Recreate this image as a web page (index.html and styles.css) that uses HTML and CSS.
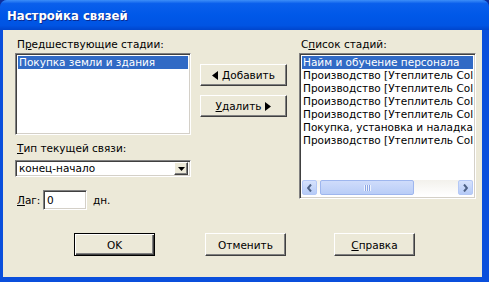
FILE: index.html
```html
<!DOCTYPE html>
<html lang="ru">
<head>
    <meta charset="UTF-8">
    <title>Настройка связей</title>
    <link rel="stylesheet" href="styles.css">
</head>
<body>
    <div class="window">
        <div class="titlebar">
            <span class="title">Настройка связей</span>
        </div>
        <div class="client">
            <div class="columns">
                <!-- left: previous stages, link type, lag -->
                <div class="col-left">
                    <div class="label">П<u>р</u>едшествующие стадии:</div>
                    <div class="listbox listbox-prev">
                        <div class="item selected">Покупка земли и здания</div>
                    </div>
                    <div class="label label-type"><u>Т</u>ип текущей связи:</div>
                    <div class="combo">
                        <span class="combo-value">конец-начало</span>
                        <span class="combo-btn">
                            <svg width="7" height="4" viewBox="0 0 7 4"><path d="M0 0h7L3.5 4z" fill="#000"/></svg>
                        </span>
                    </div>
                    <div class="lag-row">
                        <span class="lag-label"><u>Л</u>аг:</span>
                        <span class="edit">0</span>
                        <span class="lag-unit">дн.</span>
                    </div>
                </div>

                <!-- middle: add / remove -->
                <div class="col-mid">
                    <div class="btn btn-move">
                        <svg width="6" height="9" viewBox="0 0 6 9"><path d="M6 0v9L0 4.5z" fill="#000"/></svg>
                        <span><u>Д</u>обавить</span>
                    </div>
                    <div class="btn btn-move">
                        <span><u>У</u>далить</span>
                        <svg width="6" height="9" viewBox="0 0 6 9"><path d="M0 0v9l6-4.5z" fill="#000"/></svg>
                    </div>
                </div>

                <!-- right: all stages -->
                <div class="col-right">
                    <div class="label">С<u>п</u>исок стадий:</div>
                    <div class="listbox listbox-all">
                        <div class="items">
                            <div class="item selected">Найм и обучение персонала</div>
                            <div class="item">Производство [Утеплитель Col</div>
                            <div class="item">Производство [Утеплитель Col</div>
                            <div class="item">Производство [Утеплитель Col</div>
                            <div class="item">Производство [Утеплитель Col</div>
                            <div class="item">Покупка, установка и наладка</div>
                            <div class="item">Производство [Утеплитель Col</div>
                        </div>
                        <div class="hscroll">
                            <span class="sb-btn">
                                <svg width="5" height="8" viewBox="0 0 5 8"><path d="M4 0.5L1 4l3 3.5" fill="none" stroke="#4d6185" stroke-width="2"/></svg>
                            </span>
                            <div class="sb-track">
                                <div class="sb-thumb"><span class="grip"></span></div>
                            </div>
                            <span class="sb-btn">
                                <svg width="5" height="8" viewBox="0 0 5 8"><path d="M1 0.5L4 4 1 7.5" fill="none" stroke="#4d6185" stroke-width="2"/></svg>
                            </span>
                        </div>
                    </div>
                </div>
            </div>

            <div class="dialog-buttons">
                <div class="btn btn-default">OK</div>
                <div class="btn btn-cancel">Отменить</div>
                <div class="btn btn-help"><span><u>С</u>правка</span></div>
            </div>
        </div>
    </div>
</body>
</html>
```

FILE: styles.css
```css
body {
    margin: 0;
    background-color: #0d2f9c; /* behind the rounded corners */
    font-family: "DejaVu Sans", sans-serif;
    font-size: 10.5px;
    color: #000;
}
u {
    text-decoration: underline;
    text-underline-offset: 1px;
}
/* Window frame */
.window {
    width: 489px;
    height: 282px;
    display: flex;
    flex-direction: column;
    background-color: #0a4fdc;
    border-radius: 7px 7px 0 0;
    overflow: hidden;
}
.titlebar {
    height: 30px;
    flex-shrink: 0;
    display: flex;
    align-items: center;
    padding-left: 7px;
    background: linear-gradient(to bottom, #3d8ef8 0%, #0a5fec 12%, #0058e8 50%, #0054e3 85%, #0045cc 100%);
}
.title {
    color: white;
    font-family: "DejaVu Sans Condensed", "DejaVu Sans", sans-serif;
    font-weight: bold;
    font-size: 13px;
    padding-top: 1px;
    text-shadow: 1px 1px #0b2a8f;
}
.client {
    flex: 1;
    margin: 0 7px 5px 3px;
    padding: 8px 0 0 12px;
    background-color: #ece9d8;
}
/* Three columns */
.columns {
    display: flex;
    align-items: flex-start;
}
.col-left {
    width: 176px;
    display: flex;
    flex-direction: column;
}
.col-mid {
    width: 87px;
    margin-left: 9px;
    padding-top: 26px;
    display: flex;
    flex-direction: column;
    gap: 9px;
}
.col-right {
    width: 177px;
    margin-left: 12px;
}
.label {
    line-height: 13px;
    padding-left: 2px;
    margin-bottom: 2px;
    white-space: nowrap;
}
.label-type {
    margin-top: 7px;
    margin-bottom: 5px;
}
/* Sunken boxes */
.listbox, .combo, .edit {
    box-sizing: border-box;
    background-color: white;
    border: 1px solid;
    border-color: #808080 #ffffff #ffffff #808080;
    box-shadow: inset 1px 1px #404040, inset -1px -1px #d4d0c8;
}
.listbox {
    padding: 2px;
    overflow: hidden;
}
.listbox-prev {
    height: 82px;
}
.listbox-all {
    height: 146px;
    display: flex;
    flex-direction: column;
}
.items {
    flex: 1;
}
.item {
    height: 13px;
    line-height: 13px;
    padding-left: 1px;
    white-space: nowrap;
    overflow: hidden;
}
.item.selected {
    background-color: #316ac5;
    color: white;
}
/* Horizontal scrollbar, Luna style */
.hscroll {
    height: 15px;
    margin-bottom: 1px;
    display: flex;
    gap: 2px;
    background: linear-gradient(to bottom, #f3f1ec, #fefefe);
}
.sb-btn {
    width: 15px;
    box-sizing: border-box;
    display: flex;
    align-items: center;
    justify-content: center;
    border: 1px solid #b4c8f6;
    border-radius: 2px;
    background: linear-gradient(to bottom, #d6e2fc, #b6cbf7);
}
.sb-track {
    flex: 1;
}
.sb-thumb {
    width: 94px;
    height: 100%;
    margin-left: 1px;
    box-sizing: border-box;
    display: flex;
    align-items: center;
    justify-content: center;
    border: 1px solid #9eb6ee;
    border-radius: 2px;
    background: linear-gradient(to bottom, #cfdcfb, #b9cdf7);
}
.grip {
    width: 7px;
    height: 6px;
    background: repeating-linear-gradient(to right, #eef3fe 0 1px, #8ca6e4 1px 2px);
}
/* Combo box */
.combo {
    height: 17px;
    display: flex;
    align-items: center;
    padding: 2px;
}
.combo-value {
    flex: 1;
    padding-left: 1px;
    line-height: 13px;
}
.combo-btn {
    width: 14px;
    height: 13px;
    box-sizing: border-box;
    display: flex;
    align-items: center;
    justify-content: center;
    background-color: #ece9d8;
    border: 1px solid;
    border-color: #ffffff #404040 #404040 #ffffff;
    box-shadow: inset -1px -1px #808080;
}
/* Lag field */
.lag-row {
    display: flex;
    align-items: center;
    margin-top: 13px;
}
.lag-label {
    padding-left: 2px;
    width: 26px;
}
.edit {
    width: 44px;
    height: 20px;
    padding: 3px 3px 0;
    line-height: 13px;
}
.lag-unit {
    margin-left: 6px;
}
/* Push buttons */
.btn {
    box-sizing: border-box;
    height: 22px;
    display: flex;
    align-items: center;
    justify-content: center;
    gap: 4px;
    background-color: #ece9d8;
    border: 1px solid;
    border-color: #ffffff #404040 #404040 #ffffff;
    box-shadow: inset -1px -1px #808080;
    white-space: nowrap;
}
.dialog-buttons {
    display: flex;
    margin-top: 23px;
    padding-left: 59px;
}
.dialog-buttons .btn {
    width: 81px;
    height: 23px;
}
.btn-default {
    border: 1px solid #000;
    box-shadow: inset 1px 1px #ffffff, inset -1px -1px #404040, inset -2px -2px #808080;
}
.btn-cancel {
    margin-left: 50px;
}
.btn-help {
    margin-left: 48px;
}
```
